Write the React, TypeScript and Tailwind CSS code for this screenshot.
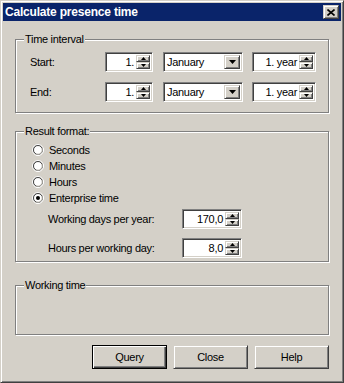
import React from 'react';

const sunken =
  'bg-white border border-t-[#808080] border-l-[#808080] border-r-white border-b-white shadow-[inset_1px_1px_#404040,inset_-1px_-1px_#d4d0c8]';
const raised =
  'bg-[#d4d0c8] border border-t-[#d4d0c8] border-l-[#d4d0c8] border-r-[#404040] border-b-[#404040] shadow-[inset_1px_1px_#fff,inset_-1px_-1px_#808080]';

const Arrow = ({ up, w = 5 }: { up?: boolean; w?: number }) => (
  <svg width={w} height={Math.ceil(w / 2)} viewBox={`0 0 ${w} ${Math.ceil(w / 2)}`} className="block">
    <polygon
      points={up ? `0,${Math.ceil(w / 2)} ${w},${Math.ceil(w / 2)} ${w / 2},0` : `0,0 ${w},0 ${w / 2},${Math.ceil(w / 2)}`}
      fill="#000"
    />
  </svg>
);

const SpinBox = ({ value, width }: { value: string; width: string }) => (
  <div className={`${sunken} ${width} h-[20px] flex items-stretch p-[2px]`}>
    <div className="flex-1 flex items-center justify-end pr-[2px] text-black leading-none">{value}</div>
    <div className="w-[14px] flex flex-col">
      <div className={`${raised} flex-1 flex items-center justify-center`}>
        <Arrow up w={5} />
      </div>
      <div className={`${raised} flex-1 flex items-center justify-center`}>
        <Arrow w={5} />
      </div>
    </div>
  </div>
);

const Dropdown = ({ value }: { value: string }) => (
  <div className={`${sunken} w-[80px] h-[20px] flex items-stretch p-[2px]`}>
    <div className="flex-1 flex items-center pl-[1px] leading-none">{value}</div>
    <div className={`${raised} w-[16px] flex items-center justify-center`}>
      <Arrow w={7} />
    </div>
  </div>
);

const Group = ({ label, className, children }: { label: string; className: string; children?: React.ReactNode }) => (
  <div
    className={`relative border border-[#808080] shadow-[inset_1px_1px_#fff,1px_1px_#fff] ${className}`}
  >
    <span className="absolute left-[8px] -top-[8px] bg-[#d4d0c8] px-[1px] leading-[14px]">{label}</span>
    {children}
  </div>
);

const Radio = ({ label, checked }: { label: string; checked?: boolean }) => (
  <div className="flex items-center h-[16px]">
    <svg width="12" height="12" viewBox="0 0 12 12" className="mr-[5px]">
      <path d="M8 1.1A5.5 5.5 0 0 0 1.1 8" stroke="#808080" fill="none" />
      <circle cx="6" cy="6" r="5.5" fill="none" stroke="#fff" />
      <path d="M10.9 4A5.5 5.5 0 0 1 4 10.9" stroke="#fff" fill="none" />
      <circle cx="6" cy="6" r="4.5" fill="#fff" stroke="#404040" />
      <path d="M10 4.3A4.5 4.5 0 0 1 4.3 10" stroke="#d4d0c8" fill="none" />
      {checked && <circle cx="6" cy="6" r="2" fill="#000" />}
    </svg>
    <span>{label}</span>
  </div>
);

const Button = ({ label, isDefault }: { label: string; isDefault?: boolean }) => (
  <div
    className={`w-[75px] h-[24px] flex items-center justify-center ${
      isDefault
        ? 'border border-black bg-[#d4d0c8] shadow-[inset_1px_1px_#fff,inset_-1px_-1px_#404040,inset_-2px_-2px_#808080]'
        : raised
    }`}
  >
    {label}
  </div>
);

export default function App() {
  return (
    <div className="w-[344px] h-[383px] bg-[#d4d0c8] border border-t-[#d4d0c8] border-l-[#d4d0c8] border-r-[#404040] border-b-[#404040] shadow-[inset_1px_1px_#fff,inset_-1px_-1px_#808080] p-[2px] font-['Liberation_Sans',sans-serif] text-[11px] tracking-[-0.3px] text-black flex flex-col">
      {/* Title bar */}
      <div className="h-[18px] bg-[#0a246a] flex items-center justify-between pl-[2px] pr-[2px]">
        <span className="text-white font-bold text-[12px] leading-none tracking-[-0.2px]">Calculate presence time</span>
        <div className={`${raised} w-[16px] h-[14px] flex items-center justify-center`}>
          <svg width="8" height="7" viewBox="0 0 8 7">
            <path d="M0.5 0.5L7.5 6.5M7.5 0.5L0.5 6.5" stroke="#000" strokeWidth="1.6" />
          </svg>
        </div>
      </div>

      <div className="flex flex-col px-[12px]">
        {/* Time interval */}
        <Group label="Time interval" className="mt-[18px] h-[74px] pt-[12px] pl-[14px] flex flex-col gap-[10px]">
          <div className="flex items-center">
            <span className="w-[75px]">Start:</span>
            <SpinBox value="1." width="w-[48px]" />
            <div className="ml-[10px]">
              <Dropdown value="January" />
            </div>
            <div className="ml-[9px]">
              <SpinBox value="1. year" width="w-[64px]" />
            </div>
          </div>
          <div className="flex items-center">
            <span className="w-[75px]">End:</span>
            <SpinBox value="1." width="w-[48px]" />
            <div className="ml-[10px]">
              <Dropdown value="January" />
            </div>
            <div className="ml-[9px]">
              <SpinBox value="1. year" width="w-[64px]" />
            </div>
          </div>
        </Group>

        {/* Result format */}
        <Group label="Result format:" className="mt-[18px] h-[131px] pt-[10px] pl-[16px] flex flex-col">
          <Radio label="Seconds" />
          <Radio label="Minutes" />
          <Radio label="Hours" />
          <Radio label="Enterprise time" checked />
          <div className="flex items-center pl-[16px] mt-[3px]">
            <span className="w-[134px]">Working days per year:</span>
            <SpinBox value="170,0" width="w-[60px]" />
          </div>
          <div className="flex items-center pl-[16px] mt-[9px]">
            <span className="w-[134px]">Hours per working day:</span>
            <SpinBox value="8,0" width="w-[60px]" />
          </div>
        </Group>

        {/* Working time */}
        <Group label="Working time" className="mt-[23px] h-[50px]" />

        {/* Buttons */}
        <div className="mt-[10px] flex justify-end gap-[6px]">
          <Button label="Query" isDefault />
          <Button label="Close" />
          <Button label="Help" />
        </div>
      </div>
    </div>
  );
}
